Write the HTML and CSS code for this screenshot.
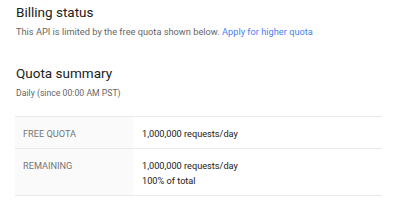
FILE: index.html
```html
<!DOCTYPE html>
<html lang="en">
<head>
    <meta charset="UTF-8">
    <meta name="viewport" content="width=device-width, initial-scale=1.0">
    <title>Quota</title>
    <link rel="stylesheet" href="styles.css">
</head>
<body>
    <div class="page">
        <section class="section">
            <h2 class="section-title">Billing status</h2>
            <p class="section-desc">This API is limited by the free quota shown below. <a href="#">Apply for higher quota</a></p>
        </section>

        <section class="section quota">
            <h2 class="section-title">Quota summary</h2>
            <p class="section-desc small">Daily (since 00:00 AM PST)</p>

            <table class="quota-table">
                <tr>
                    <th>Free quota</th>
                    <td>1,000,000 requests/day</td>
                </tr>
                <tr>
                    <th>Remaining</th>
                    <td>1,000,000 requests/day<br>100% of total</td>
                </tr>
            </table>
        </section>
    </div>
</body>
</html>
```

FILE: styles.css
```css
:root {
    --text-color: #212121;
    --muted-color: #666666;
    --link-color: #4a7ff0;
    --border-color: #e9e9e9;
    --label-bg: #fafafa;
}

* {
    margin: 0;
    padding: 0;
    box-sizing: border-box;
}

body {
    font-family: Roboto, "Liberation Sans", sans-serif;
    background-color: #ffffff;
    color: var(--text-color);
}

.page {
    padding: 3px 15px 0;
}

.section-title {
    font-size: 13.5px;
    font-weight: 400;
    line-height: 18px;
    padding-left: 1px;
}

.section-desc {
    font-size: 9.25px;
    line-height: 14px;
    color: var(--muted-color);
    margin-top: 4px;
    padding-left: 1px;
}

.section-desc a {
    color: var(--link-color);
    text-decoration: none;
}

.section-desc.small {
    font-size: 8.7px;
}

.quota {
    margin-top: 25px;
}

.quota-table {
    width: 367px;
    border-collapse: collapse;
    margin-top: 16px;
    font-size: 9.2px;
    line-height: 15px;
}

.quota-table tr {
    border-top: 1px solid var(--border-color);
    border-bottom: 1px solid var(--border-color);
}

.quota-table th {
    width: 118px;
    background-color: var(--label-bg);
    color: #757575;
    font-weight: 400;
    text-transform: uppercase;
    text-align: left;
    vertical-align: top;
    padding: 9px 8px 7px;
}

.quota-table td {
    padding: 9px 9px 7px;
    vertical-align: top;
}
```
